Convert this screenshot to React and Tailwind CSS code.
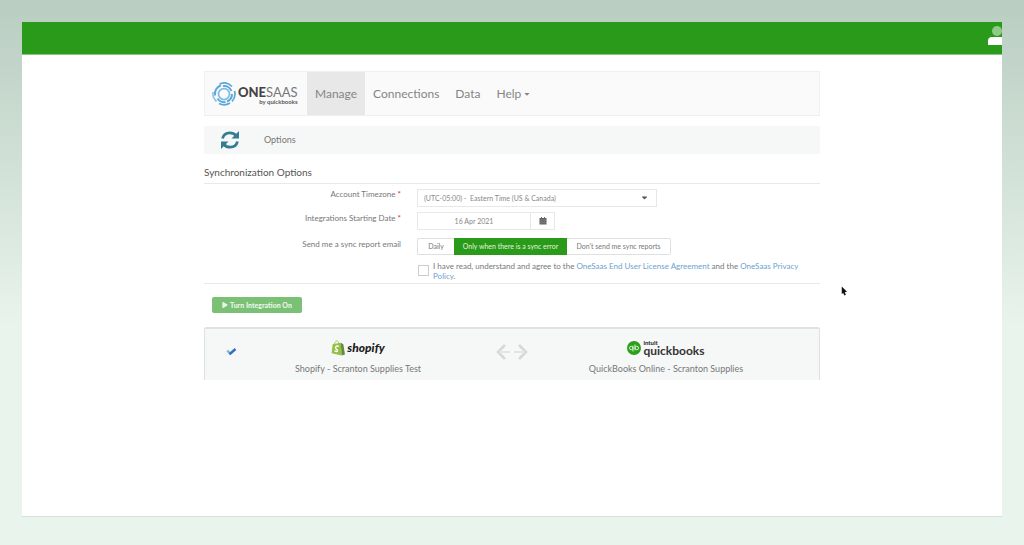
import { FaCaretDown, FaPlay } from "react-icons/fa";

function OneSaasLogo() {
  return (
    <a href="#home" className="flex w-[102px] shrink-0 items-center gap-[2px] pl-[7px]">
      <svg viewBox="0 0 48 48" className="h-6 w-6 shrink-0" fill="none">
        <g stroke="#5aa9d8" strokeWidth="3.500">
          <circle cx="24" cy="24" r="11" stroke="#7fbde2" />
          <path d="M6 27A18.500 18.500 0 0 1 18 6.500" strokeWidth="4" />
          <path d="M15 4A22 22 0 0 1 40 9" />
          <path d="M22 8A16 16 0 0 1 39 18" strokeWidth="4" />
          <path d="M45 18A22 22 0 0 1 40 39" />
          <path d="M40 24A16 16 0 0 1 30 39" strokeWidth="4" />
          <path d="M36 42A22 22 0 0 1 14 43" />
          <path d="M27 40A16 16 0 0 1 11 33" strokeWidth="4" />
          <path d="M9 39A22 22 0 0 1 2 20" stroke="#8fc7e6" />
        </g>
      </svg>
      <span className="flex flex-col items-end pt-1">
        <span className="text-[13px] leading-[12px] text-[#77777a]">
          <b className="font-black text-[#444]">ONE</b>SAAS
        </span>
        <span className="text-[6px] leading-[7px] font-bold text-[#58585a]">by quickbooks</span>
      </span>
    </a>
  );
}

function Navbar() {
  return (
    <nav className="flex h-[45px] border border-[#f0f0f0] bg-[#fafafa] text-[12px] text-[#858585]">
      <OneSaasLogo />
      <a href="#manage" className="flex items-center bg-[#e8e8e8] px-2">
        Manage
      </a>
      <a href="#connections" className="flex items-center px-2">
        Connections
      </a>
      <a href="#data" className="flex items-center px-2">
        Data
      </a>
      <button type="button" className="flex items-center gap-[3px] px-2">
        Help
        <FaCaretDown className="h-2 w-[6px]" />
      </button>
    </nav>
  );
}

function RefreshIcon() {
  return (
    <svg viewBox="0 0 20 20" className="h-5 w-5" fill="none" stroke="#337c91" strokeWidth="2.800">
      <path d="M2.500 8.500C3.500 4.500 6.500 2.800 9.800 2.800C12.500 2.800 14.500 3.800 16 5.500" />
      <path d="M17.500 11.500C16.500 15.500 13.500 17.200 10.200 17.200C7.500 17.200 5.500 16.200 4 14.500" />
      <path d="M19 1V8.500H11.500L14 6L17 3Z" fill="#337c91" stroke="none" />
      <path d="M1 19V11.500H8.500L6 14L3 17Z" fill="#337c91" stroke="none" />
    </svg>
  );
}

function CalendarIcon() {
  return (
    <svg viewBox="0 0 16 16" className="h-2 w-2" fill="#666">
      <path d="M1 2H4V0H6V2H10V0H12V2H15V15H1Z" />
      <path d="M1 6H15M5.500 6V15M10.500 6V15M1 10.500H15" stroke="#999" strokeWidth="0.600" />
    </svg>
  );
}

function ShopifyLogo() {
  return (
    <div className="flex h-5 items-center gap-[2px]">
      <svg viewBox="0 0 26 30" className="h-4 w-[14px]">
        <path d="M3 8L18 5L20 29L1 25Z" fill="#95bf47" />
        <path d="M18 5L23 8L26 27L20 29Z" fill="#5e8e3e" />
        <path d="M6 9C7 3 10 1 12 2C14 3 14 5 14 7" fill="none" stroke="#95bf47" strokeWidth="1.500" />
        <path
          d="M14.500 12C10 10 7 13 9 16C10 18 13 18 12 20.500C11 22.500 8 21 6.500 20"
          fill="none"
          stroke="#fff"
          strokeWidth="2.500"
        />
      </svg>
      <span className="text-[12px] leading-4 font-black text-[#1c1c1c] italic">shopify</span>
    </div>
  );
}

function QuickbooksLogo() {
  return (
    <div className="flex h-5 items-center gap-[2px]">
      <svg viewBox="0 0 28 28" className="h-[14px] w-[14px]" fill="none">
        <circle cx="14" cy="14" r="14" fill="#2ca01c" />
        <g stroke="#d9f0d5" strokeWidth="2">
          <circle cx="8.500" cy="14" r="3.500" />
          <path d="M12 9.500V21" />
          <circle cx="19.500" cy="14" r="3.500" />
          <path d="M16 7V18.500" />
        </g>
      </svg>
      <span className="flex flex-col text-[#333]">
        <span className="text-[6px] leading-[5px] font-black">intuit</span>
        <span className="text-[12px] leading-[11px] font-bold">quickbooks</span>
      </span>
    </div>
  );
}

function SyncForm() {
  return (
    <form className="mt-1 border-b border-[#e9e9e9] pb-[2px] text-[8px] text-[#777]">
      <div className="grid grid-cols-[197px_1fr] gap-x-4">
        <label htmlFor="timezone" className="text-right leading-3">
          Account Timezone <span className="font-bold text-[#e0453a]">*</span>
        </label>
        <div className="relative mt-px mb-[5px] w-60">
          <select
            id="timezone"
            className="h-[18px] w-full appearance-none border border-[#e8e8e8] bg-white px-[6px] text-[7px] text-[#888]"
          >
            <option>(UTC-05:00) -&nbsp; Eastern Time (US &amp; Canada)</option>
          </select>
          <FaCaretDown className="pointer-events-none absolute top-1 right-2 h-[9px] w-[9px] text-[#555]" />
        </div>

        <label htmlFor="start-date" className="text-right leading-3">
          Integrations Starting Date <span className="font-bold text-[#e0453a]">*</span>
        </label>
        <div className="mb-2 flex h-[18px] w-[138px] border border-[#e8e8e8]">
          <input
            id="start-date"
            type="text"
            defaultValue="16 Apr 2021"
            className="w-0 flex-1 text-center text-[7px] text-[#888]"
          />
          <button
            type="button"
            aria-label="Pick a date"
            className="flex w-6 items-center justify-center border-l border-[#e8e8e8]"
          >
            <CalendarIcon />
          </button>
        </div>

        <span className="text-right leading-3">Send me a sync report email</span>
        <div className="mb-[6px] flex h-[17px] text-[7px] text-[#777]">
          <button type="button" className="w-[37px] rounded-l-xs border border-r-0 border-[#e0e0e0]">
            Daily
          </button>
          <button type="button" className="w-[113px] bg-[#2a9a1a] text-[#e2f3df]">
            Only when there is a sync error
          </button>
          <button type="button" className="w-[104px] rounded-r-xs border border-l-0 border-[#e0e0e0]">
            Don&apos;t send me sync reports
          </button>
        </div>

        <div className="col-start-2 flex gap-1">
          <input
            id="agree"
            type="checkbox"
            className="mt-1 ml-px h-[11px] w-[11px] shrink-0 appearance-none border border-[#ccc] bg-white"
          />
          <label htmlFor="agree" className="text-[8px] leading-[10px]">
            I have read, understand and agree to the{" "}
            <a href="#eula" className="text-[#6c9fd0]">
              OneSaas End User License Agreement
            </a>{" "}
            and the{" "}
            <a href="#privacy" className="text-[#6c9fd0]">
              OneSaas Privacy Policy
            </a>
            .
          </label>
        </div>
      </div>
    </form>
  );
}

function IntegrationCard() {
  return (
    <div className="mt-[14px] flex h-[53px] rounded-t-xs border-x border-t-2 border-[#dfe2e2] bg-[#f6f8f8] text-[9px] text-[#777]">
      <div className="flex w-[52px] justify-center pt-[19px]">
        <svg viewBox="0 0 20 16" className="h-2 w-[11px]" fill="none" strokeWidth="5">
          <path d="M1.500 5L8 12" stroke="#86b3dd" />
          <path d="M6 12.500L18 2" stroke="#3273bd" />
        </svg>
      </div>
      <div className="flex w-[202px] flex-col items-center pt-[9px]">
        <ShopifyLogo />
        <span className="mt-[5px] leading-3">Shopify - Scranton Supplies Test</span>
      </div>
      <div className="flex flex-1 justify-center pt-[15px]">
        <svg viewBox="0 0 32 16" className="h-4 w-8" fill="none" stroke="#d6d8d8" strokeWidth="2.500">
          <path d="M9 1L2 8L9 15" />
          <path d="M23 1L30 8L23 15" />
          <path d="M3 8H14M18 8H29" strokeWidth="2" stroke="#e4e6e6" />
        </svg>
      </div>
      <div className="flex w-[202px] flex-col items-center pt-[9px]">
        <QuickbooksLogo />
        <span className="mt-[5px] leading-3">QuickBooks Online - Scranton Supplies</span>
      </div>
      <div className="w-[52px]" />
    </div>
  );
}

export default function App() {
  return (
    <div className="flex min-h-screen flex-col bg-linear-to-b from-[#b9cdc1] to-[#e9f4ec] to-60% px-[22px] pt-[22px] pb-7 font-['Lato',sans-serif]">
      <div className="relative flex flex-1 flex-col border-b border-[#cfe3d3] bg-white">
        <header className="flex h-[33px] justify-end overflow-hidden border-b border-[#8fc489] bg-[#2a9a1a]">
          <svg viewBox="0 0 14 20" className="mt-[3px] h-5 w-[14px]">
            <circle cx="9" cy="6" r="5" fill="#8fca87" />
            <path d="M0 20V16Q0 12 4 12H14V20Z" fill="#fff" />
          </svg>
        </header>

        <main className="mx-auto w-full max-w-[616px] pt-4">
          <Navbar />

          <div className="mt-[10px] flex h-7 items-center gap-6 bg-[#f6f8f8] pl-4">
            <RefreshIcon />
            <span className="text-[9px] text-[#777]">Options</span>
          </div>

          <h1 className="mt-[10px] border-b border-[#e9e9e9] pb-[3px] text-[10px] leading-4 text-[#555]">
            Synchronization Options
          </h1>
          <SyncForm />

          <button
            type="button"
            className="mt-[13px] ml-2 flex h-4 w-[90px] items-center justify-center gap-[2px] rounded-xs bg-[#7ac075] text-[7px] font-black text-[#eaf6e9]"
          >
            <FaPlay className="h-[6px] w-[6px]" />
            Turn Integration On
          </button>

          <IntegrationCard />
        </main>

        {/* Mouse pointer */}
        <svg viewBox="0 0 8 12" className="absolute top-[264px] left-[819px] h-[10px] w-[6px]">
          <path d="M1 0L8 7L5 7.500L6.500 11L4.500 12L3 8.500L1 10Z" fill="#111" />
        </svg>
      </div>
    </div>
  );
}
